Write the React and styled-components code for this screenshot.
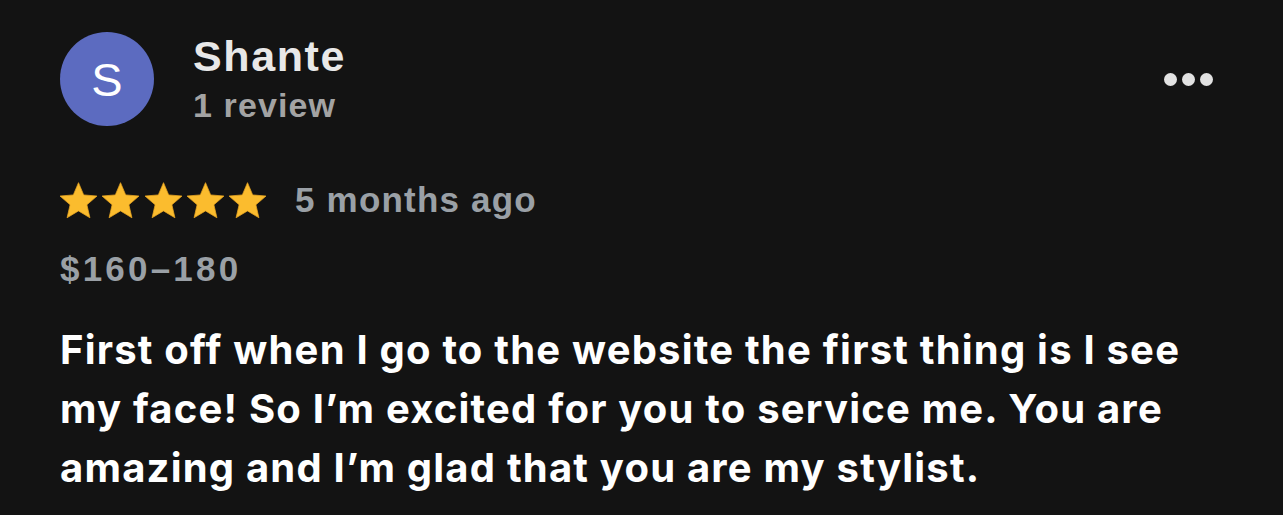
import React from "react";
import styled, { createGlobalStyle } from "styled-components";

const GlobalStyle = createGlobalStyle`
  html, body {
    margin: 0;
    padding: 0;
    background: #131313;
  }
`;

const Page = styled.div`
  width: 1283px;
  height: 515px;
  box-sizing: border-box;
  padding: 32px 70px 0 60px;
  background: #131313;
  overflow: hidden;
  font-family: "Liberation Sans", Arial, sans-serif;
`;

const Header = styled.div`
  display: flex;
  align-items: flex-start;
`;

const Avatar = styled.div`
  width: 94px;
  height: 94px;
  border-radius: 50%;
  background: #5c6bc0;
  color: #ffffff;
  display: flex;
  align-items: center;
  justify-content: center;
  font-size: 47px;
  line-height: 1;
  flex-shrink: 0;
`;

const Who = styled.div`
  margin-left: 39px;
  display: flex;
  flex-direction: column;
  flex: 1;
`;

const Name = styled.div`
  color: #e8e8e8;
  font-weight: 700;
  font-size: 43px;
  line-height: 48px;
  letter-spacing: 1.6px;
`;

const Sub = styled.div`
  margin-top: 6px;
  color: #a3a3a3;
  font-weight: 700;
  font-size: 34px;
  line-height: 38px;
  letter-spacing: 1.1px;
`;

const More = styled.button`
  margin-top: 41px;
  display: flex;
  gap: 5px;
  padding: 0;
  border: none;
  background: none;
`;

const Dot = styled.span`
  width: 13px;
  height: 13px;
  border-radius: 50%;
  background: #e2e2e2;
`;

const Rating = styled.div`
  margin-top: 56px;
  display: flex;
  align-items: center;
  height: 37px;
`;

const Stars = styled.div`
  display: flex;
  gap: 5.25px;
`;

const Ago = styled.span`
  margin-left: 29px;
  color: #9aa0a6;
  font-weight: 700;
  font-size: 35px;
  line-height: 39px;
  letter-spacing: 1.2px;
  position: relative;
  top: -1px;
`;

const Price = styled.div`
  margin-top: 31px;
  color: #9aa0a6;
  font-weight: 700;
  font-size: 35px;
  line-height: 38px;
  letter-spacing: 3.2px;
`;

const Body = styled.p`
  margin: 32px 0 0;
  width: 1140px;
  color: #ffffff;
  font-family: Inter, Roboto, "Liberation Sans", sans-serif;
  font-weight: 700;
  font-size: 40px;
  line-height: 59px;
  letter-spacing: 1.2px;
`;

function Star() {
  return (
    <svg width="37" height="37" viewBox="2 2 20 19.3">
      <path
        d="M12 17.27L18.18 21l-1.64-7.03L22 9.24l-7.19-.61L12 2 9.19 8.63 2 9.24l5.46 4.73L5.82 21z"
        fill="#fbbc2e"
        stroke="#e9a520"
        strokeWidth="0.4"
        strokeLinejoin="round"
      />
    </svg>
  );
}

export default function App() {
  return (
    <Page>
      <GlobalStyle />
      <Header>
        <Avatar>S</Avatar>
        <Who>
          <Name>Shante</Name>
          <Sub>1 review</Sub>
        </Who>
        <More aria-label="More options">
          <Dot />
          <Dot />
          <Dot />
        </More>
      </Header>
      <Rating>
        <Stars>
          {[0, 1, 2, 3, 4].map((i) => (
            <Star key={i} />
          ))}
        </Stars>
        <Ago>5 months ago</Ago>
      </Rating>
      <Price>$160–180</Price>
      <Body>
        First off when I go to the website the first thing is I see my face! So
        I’m excited for you to service me. You are amazing and I’m glad that you
        are my stylist.
      </Body>
    </Page>
  );
}
